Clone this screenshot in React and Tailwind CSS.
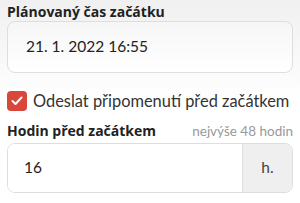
import React from 'react';

export default function App() {
    return (
        <div className="w-[300px] h-[203px] overflow-hidden bg-gradient-to-b from-[#f0f0f0] via-white to-white px-[7px] pt-[3px]" style={{ fontFamily: 'Lato, sans-serif' }}>
            <label className="block text-[14px] font-bold text-[#222] leading-[18px]" style={{ fontFamily: '"Open Sans", sans-serif' }}>Plánovaný čas začátku</label>
            <div className="h-[52px] rounded-[8px] border border-[#dedede] bg-gradient-to-b from-[#f6f6f6] to-white flex items-center pl-[18px] text-[15.5px] text-[#222]">
                21. 1. 2022 16:55
            </div>
            <div className="mt-[17px] flex items-center gap-[6px]">
                <span className="w-[20px] h-[20px] rounded-[4px] bg-[#d9463a] flex items-center justify-center">
                    <svg width="12" height="10" viewBox="0 0 12 10" fill="none">
                        <path d="M1.5 5 L4.5 8 L10.5 1.5" stroke="white" strokeWidth="2" strokeLinecap="round" strokeLinejoin="round" />
                    </svg>
                </span>
                <span className="text-[16.4px] text-[#333] whitespace-nowrap leading-[22px]">Odeslat připomenutí před začátkem</span>
            </div>
            <div className="mt-[10px] flex items-baseline justify-between leading-[18px]">
                <span className="text-[14px] font-bold text-[#222]" style={{ fontFamily: '"Open Sans", sans-serif' }}>Hodin před začátkem</span>
                <span className="text-[13.5px] text-[#999]">nejvýše 48 hodin</span>
            </div>
            <div className="mt-[3px] h-[50px] rounded-[8px] border border-[#dedede] flex overflow-hidden text-[15.5px] text-[#222]">
                <div className="flex-1 flex items-center pl-[16px] bg-white">16</div>
                <div className="w-[50px] border-l border-[#dedede] bg-[#efefef] flex items-center justify-center text-[#444]">h.</div>
            </div>
        </div>
    );
}
